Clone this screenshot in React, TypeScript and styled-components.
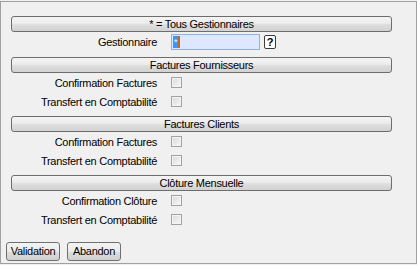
import React from 'react';
import styled, { createGlobalStyle } from 'styled-components';

const GlobalStyle = createGlobalStyle`
    html, body {
        margin: 0;
        padding: 0;
        background: #f0f0f0;
    }
    body {
        font-family: "Liberation Sans", Arial, sans-serif;
        font-size: 11px;
        letter-spacing: -0.28px;
        color: #000;
    }
`;

const Frame = styled.div`
    box-sizing: border-box;
    width: 417px;
    height: 263px;
    margin-top: 1px;
    border: 1px solid #a0a0a0;
    background: #f0f0f0;
    padding: 14px 0 0 5px;
    display: flex;
    flex-direction: column;
`;

const Form = styled.div`
    display: flex;
    flex-direction: column;
    width: 381px;
    margin-left: 5px;
`;

const Group = styled.div`
    display: flex;
    flex-direction: column;
    margin-bottom: 5px;
`;

const SectionBar = styled.div`
    box-sizing: border-box;
    height: 16px;
    border: 1px solid #6d6d6d;
    border-radius: 3px;
    background: linear-gradient(#f4f4f4 0%, #ececec 45%, #dedede 55%, #d2d2d2 100%);
    text-align: center;
    line-height: 14px;
    white-space: nowrap;
`;

const Row = styled.div<{ $tall?: boolean }>`
    display: grid;
    grid-template-columns: 146px auto;
    column-gap: 14px;
    align-items: center;
    height: ${(p) => (p.$tall ? '20px' : '19px')};
`;

const Label = styled.span`
    text-align: right;
    white-space: nowrap;
`;

const Field = styled.div`
    display: flex;
    align-items: center;
    gap: 4px;
`;

const TextBox = styled.div`
    box-sizing: border-box;
    width: 89px;
    height: 16px;
    border: 1px solid #8fb2e0;
    background: #dde7fe;
    padding: 1px 0 0 1px;
    display: flex;
`;

const Selected = styled.span`
    display: inline-block;
    height: 12px;
    line-height: 12px;
    padding: 0 1px 0 1px;
    background: #3399ff;
    color: #fff;
    font-size: 9px;
    border-right: 2px solid #c8641e;
`;

const HelpButton = styled.div`
    box-sizing: border-box;
    width: 12px;
    height: 14px;
    border: 1px solid #3a3a3a;
    border-radius: 2px;
    background: #fff;
    font-weight: bold;
    font-size: 11px;
    line-height: 12px;
    text-align: center;
`;

const Check = styled.span`
    box-sizing: border-box;
    display: inline-block;
    width: 11px;
    height: 11px;
    border: 1px solid #a2a2a2;
    background: linear-gradient(135deg, #d8d8d8 0%, #ececec 60%, #f6f6f6 100%);
    box-shadow: inset 0 0 0 1px #f4f4f4;
`;

const Actions = styled.div`
    display: flex;
    gap: 7px;
    margin-top: 8px;
`;

const Button = styled.div<{ $w: number }>`
    box-sizing: border-box;
    width: ${(p) => p.$w}px;
    height: 19px;
    border: 1px solid #707070;
    border-radius: 3px;
    background: linear-gradient(#f3f3f3 0%, #ebebeb 50%, #dddddd 51%, #d0d0d0 100%);
    line-height: 17px;
    text-align: center;
    white-space: nowrap;
`;

const sections = [
    { title: 'Factures Fournisseurs', rows: ['Confirmation Factures', 'Transfert en Comptabilité'] },
    { title: 'Factures Clients', rows: ['Confirmation Factures', 'Transfert en Comptabilité'] },
    { title: 'Clôture Mensuelle', rows: ['Confirmation Clôture', 'Transfert en Comptabilité'] },
];

const App = () => {
    return (
        <>
            <GlobalStyle />
            <Frame>
                <Form>
                    <Group>
                        <SectionBar>* = Tous Gestionnaires</SectionBar>
                        <Row $tall>
                            <Label>Gestionnaire</Label>
                            <Field>
                                <TextBox>
                                    <Selected>*</Selected>
                                </TextBox>
                                <HelpButton>?</HelpButton>
                            </Field>
                        </Row>
                    </Group>
                    {sections.map((s) => (
                        <Group key={s.title}>
                            <SectionBar>{s.title}</SectionBar>
                            {s.rows.map((r) => (
                                <Row key={r}>
                                    <Label>{r}</Label>
                                    <Field>
                                        <Check />
                                    </Field>
                                </Row>
                            ))}
                        </Group>
                    ))}
                </Form>
                <Actions>
                    <Button $w={54}>Validation</Button>
                    <Button $w={54}>Abandon</Button>
                </Actions>
            </Frame>
        </>
    );
};

export default App;
